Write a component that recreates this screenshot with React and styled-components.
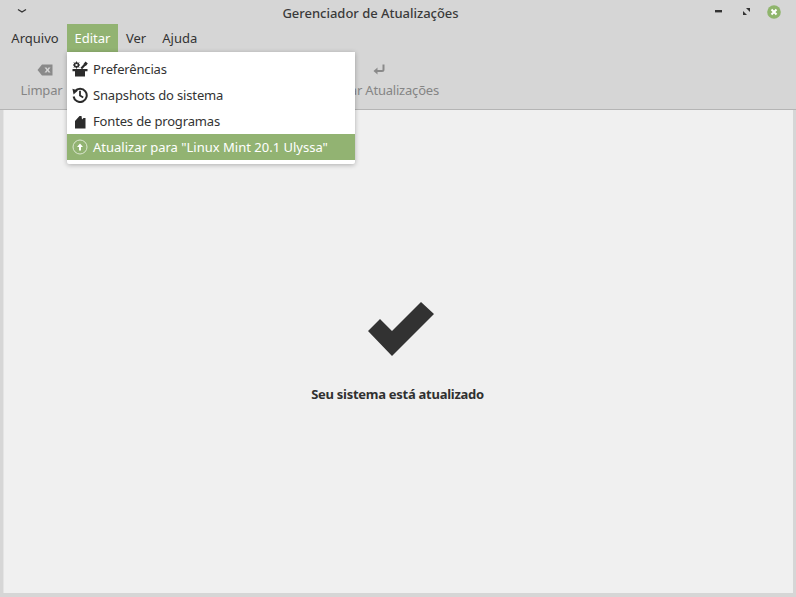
import React from "react";
import styled, { createGlobalStyle } from "styled-components";

const Global = createGlobalStyle`
  html, body { margin: 0; padding: 0; width: 796px; height: 597px; overflow: hidden; background: #d6d6d6; }
  * { box-sizing: border-box; }
`;
const Window = styled.div`
  width: 796px; height: 597px; background: #d6d6d6; display: flex; flex-direction: column; position: relative;
  font-family: "Noto Sans", "Open Sans", sans-serif; font-size: 13px; color: #2f2f2f;
`;
const TitleBar = styled.header`
  height: 24px; flex: none; position: relative; display: flex; align-items: center; justify-content: center; padding-right: 55px;
`;
const Title = styled.div`
  font-weight: 500; color: #3a3a3a; font-size: 13px; letter-spacing: -0.02px; padding-top: 2px;
`;
const TitleMenu = styled.svg` position: absolute; left: 17px; top: 8px; `;
const Controls = styled.div`
  position: absolute; left: 0; top: 0; width: 100%; height: 24px;
`;
const Ctl = styled.svg` position: absolute; left: ${p => p.$x}px; top: ${p => p.$y}px; `;
const MenuBar = styled.nav`
  height: 28px; flex: none; display: flex; padding-left: 3px;
`;
const MenuItem = styled.div`
  padding: 0 8px; display: flex; align-items: center; justify-content: center; height: 28px; font-size: 13px;
  ${p => p.$w ? `width:${p.$w}px;padding:0;` : ""}
  ${p => p.$active ? "background:#92b372;color:#fff;" : "color:#333;"}
`;
const Toolbar = styled.div`
  height: 58px; flex: none; display: flex; border-bottom: 1px solid #b5b5b5; position: relative;
`;
const ToolBtn = styled.div`
  position: absolute; top: 0; left: ${p => p.$x}px; width: ${p => p.$w}px; height: 57px;
  display: flex; flex-direction: column; align-items: center; color: #858585; font-size: 13px;
`;
const ToolIcon = styled.svg` margin-top: 11px; margin-left: ${p => p.$shift || 0}px; height: 14px; flex: none; `;
const ToolLabel = styled.span` margin-top: 4px; line-height: 18px; white-space: nowrap; letter-spacing: -0.2px; `;
const Content = styled.main`
  flex: 1; margin: 0 3px 4px 3px; background: #f0f0f0; display: flex; flex-direction: column; align-items: center;
  border-left: 1px solid #e4e4e4;
`;
const Check = styled.svg` margin-top: 192px; margin-left: 4px; flex: none; `;
const Status = styled.div`
  margin-top: 29px; margin-right: 2px; font-weight: 700; font-size: 13px; color: #303030; line-height: 18px; letter-spacing: -0.27px;
`;
const Menu = styled.div`
  position: absolute; left: 67px; top: 52px; width: 288px; height: 112px; background: #fff; padding: 4px 0;
  border-radius: 0 0 2px 2px; box-shadow: 0 1px 5px rgba(0,0,0,.28);
`;
const Row = styled.div`
  height: 26px; display: flex; align-items: center; position: relative; padding-left: 26px; font-size: 13px; white-space: nowrap;
  letter-spacing: ${p => p.$tight ? "-0.16px" : "0"};
  ${p => p.$active ? "background:#92b372;color:#fff;" : "color:#333;"}
`;
const RowIcon = styled.svg` position: absolute; left: 5px; top: 5px; `;

export default function App() {
  return (
    <Window>
      <Global />
      <TitleBar>
        <TitleMenu width="10" height="6" viewBox="0 0 10 6"><path d="M1 1.5 L5 4 L9 1.5" fill="none" stroke="#333" strokeWidth="1.4"/></TitleMenu>
        <Title>Gerenciador de Atualizações</Title>
        <Controls>
          <Ctl $x={715} $y={10} width="7" height="3"><rect y="0" width="7" height="2.4" fill="#333"/></Ctl>
          <Ctl $x={743} $y={8} width="7" height="7" viewBox="0 0 7 7"><path d="M3 0H7V4Z M0 3V7H4Z" fill="#333"/></Ctl>
          <Ctl $x={767} $y={5} width="14" height="14" viewBox="0 0 14 14"><circle cx="7" cy="7" r="6.8" fill="#8fb56c"/><path d="M4.5 4.5L9.5 9.5M9.5 4.5L4.5 9.5" stroke="#fff" strokeWidth="2"/></Ctl>
        </Controls>
      </TitleBar>
      <MenuBar>
        <MenuItem $w={64}>Arquivo</MenuItem>
        <MenuItem $active $w={51}>Editar</MenuItem>
        <MenuItem>Ver</MenuItem>
        <MenuItem>Ajuda</MenuItem>
      </MenuBar>
      <Toolbar>
        <ToolBtn $x={11} $w={61}>
          <ToolIcon $shift={7} width="16" height="14" viewBox="0 0 16 14"><path fillRule="evenodd" d="M5 1.5H15.5V12.5H5L0.5 7Z M7.5 4.5L9.5 7L7.5 9.5H9.5L10.5 8L11.5 9.5H13.5L11.5 7L13.5 4.5H11.5L10.5 6L9.5 4.5Z" fill="#8a8a8a"/></ToolIcon>
          <ToolLabel>Limpar</ToolLabel>
        </ToolBtn>
        <ToolBtn $x={318} $w={120}>
          <ToolIcon $shift={2} width="14" height="14" viewBox="0 0 14 14"><path d="M11.5 1.5V6.5Q11.5 8 10 8H4.5" fill="none" stroke="#8a8a8a" strokeWidth="2"/><path d="M1.5 8L5.5 4.5V11.5Z" fill="#8a8a8a"/></ToolIcon>
          <ToolLabel>Instalar Atualizações</ToolLabel>
        </ToolBtn>
      </Toolbar>
      <Content>
        <Check width="66" height="54" viewBox="0 0 66 54"><path d="M0 29L12 17L24 29L53 0L66 12L24 54Z" fill="#323232"/></Check>
        <Status>Seu sistema está atualizado</Status>
      </Content>
      <Menu>
        <Row $tight>
          <RowIcon width="16" height="16" viewBox="0 0 16 16"><path d="M0.5 8H15.5V10.2H13V15.5H3V10.2H0.5Z" fill="#2b2b2b"/><circle cx="4.5" cy="4" r="2.1" fill="none" stroke="#2b2b2b" strokeWidth="1.4"/><path d="M4.5 0.5V7.5M1 4H8M2 1.5L7 6.5M7 1.5L2 6.5" stroke="#2b2b2b" strokeWidth="1"/><circle cx="4.5" cy="4" r="1.1" fill="#fff"/><path d="M9.3 7.5L13 3.5" stroke="#2b2b2b" strokeWidth="2.2"/><path d="M11.5 3L13.5 0.5L15.8 2.4L13.8 5Z" fill="#2b2b2b"/></RowIcon>
          Preferências
        </Row>
        <Row $tight>
          <RowIcon width="16" height="16" viewBox="0 0 16 16"><path d="M2.9 4.4A6.6 6.6 0 1 1 1.6 9.5" fill="none" stroke="#2b2b2b" strokeWidth="2"/><path d="M0.4 1.8L6 3.4L1.6 7.6Z" fill="#2b2b2b"/><path d="M8 3.8V8.4L11.2 10.4" fill="none" stroke="#2b2b2b" strokeWidth="1.8"/></RowIcon>
          Snapshots do sistema
        </Row>
        <Row $tight>
          <RowIcon width="16" height="16" viewBox="0 0 16 16"><path d="M3 15.5V8L7.5 3H9.5L10 6.5L11.5 5H13.5V15.5Z" fill="#2b2b2b"/></RowIcon>
          Fontes de programas
        </Row>
        <Row $active>
          <RowIcon width="16" height="16" viewBox="0 0 16 16"><circle cx="8" cy="8" r="7" fill="none" stroke="#dbe6cf" strokeWidth="1"/><path d="M8 4.5L11 8H9V11.5H7V8H5Z" fill="#fff"/></RowIcon>
          Atualizar para "Linux Mint 20.1 Ulyssa"
        </Row>
      </Menu>
    </Window>
  );
}
